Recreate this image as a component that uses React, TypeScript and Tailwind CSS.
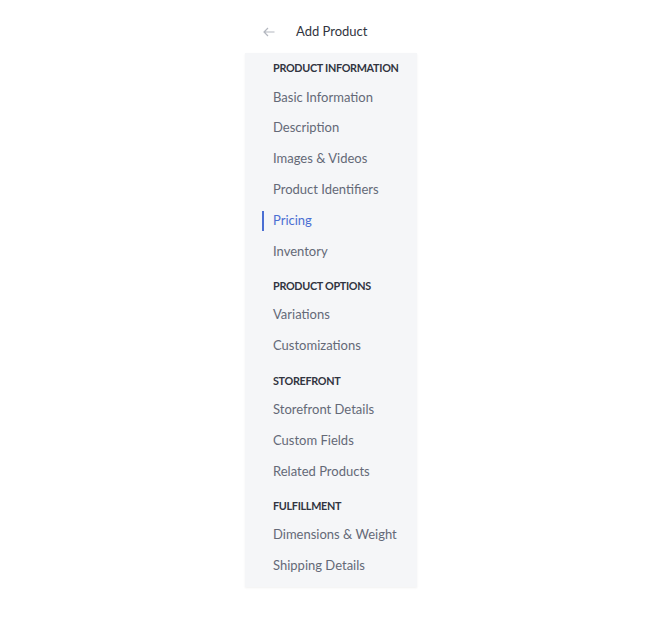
import React from 'react';

type Section = {
    title: string;
    items: string[];
};

const sections: Section[] = [
    {
        title: 'Product Information',
        items: ['Basic Information', 'Description', 'Images & Videos', 'Product Identifiers', 'Pricing', 'Inventory'],
    },
    { title: 'Product Options', items: ['Variations', 'Customizations'] },
    { title: 'Storefront', items: ['Storefront Details', 'Custom Fields', 'Related Products'] },
    { title: 'Fulfillment', items: ['Dimensions & Weight', 'Shipping Details'] },
];

const ACTIVE = 'Pricing';

export default function App() {
    return (
        <div className="min-h-[617px] bg-white font-['Lato','Noto_Sans',sans-serif]">
            <div className="ml-[245px] w-[172px] pt-5">
                {/* Header */}
                <div className="flex h-6 items-center gap-[21px] pl-[18px]">
                    <svg width="12" height="10" viewBox="0 0 12 10" fill="none" stroke="#b3b7bf" strokeWidth="1.2">
                        <path d="M11.5 5H1M5 1L1 5l4 4" />
                    </svg>
                    <span className="text-[13px] text-[#313440]">Add Product</span>
                </div>

                {/* Nav panel */}
                <nav className="mt-[9px] bg-[#f5f6f8] pt-[2px] pb-[6px] shadow-[0_1px_2px_rgba(0,0,0,0.06)]">
                    {sections.map((section, i) => (
                        <div key={section.title} className={i > 0 ? 'mt-[6px]' : ''}>
                            <div className="flex h-[27px] items-center pl-[28px] text-[10.8px] font-bold uppercase tracking-[-0.3px] text-[#313440]">
                                {section.title}
                            </div>
                            {section.items.map((item) => {
                                const active = item === ACTIVE;
                                return (
                                    <div key={item} className="flex h-[30.8px] items-center pl-[17px]">
                                        <span className={`h-5 w-[2px] ${active ? 'bg-[#4b6fd3]' : 'bg-transparent'}`} />
                                        <span
                                            className={`ml-[9px] text-[13px] ${active ? 'text-[#4b6fd3]' : 'text-[#646977]'}`}
                                        >
                                            {item}
                                        </span>
                                    </div>
                                );
                            })}
                        </div>
                    ))}
                </nav>
            </div>
        </div>
    );
}
